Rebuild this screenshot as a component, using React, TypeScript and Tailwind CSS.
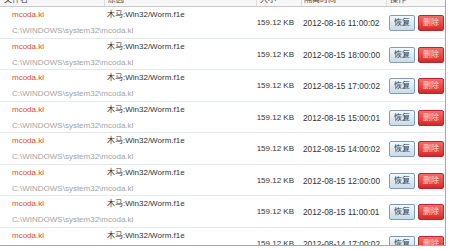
const rows = [
  "2012-08-16 11:00:02",
  "2012-08-15 18:00:00",
  "2012-08-15 17:00:02",
  "2012-08-15 15:00:01",
  "2012-08-15 14:00:02",
  "2012-08-15 12:00:00",
  "2012-08-15 11:00:01",
  "2012-08-14 17:00:02",
];

const font = { fontFamily: '"Liberation Sans", "Noto Sans CJK SC", sans-serif' };

export default function App() {
  return (
    <div className="w-[450px] h-[249px] bg-white overflow-hidden" style={font}>
      <div className="w-[446px] h-[246px] border-r border-b border-[#a9a9a9] overflow-hidden">
        {/* header, scrolled up so only its lower edge shows */}
        <div className="-mt-[11px] h-[18px] flex items-end text-[8px] leading-[8px] text-[#444] bg-[#f7f7f7] border-b border-[#c9c9c9]">
          <div className="w-[104px] pl-[4px] pb-[2px]">文件名</div>
          <div className="w-[152px] pl-[3px] pb-[2px] border-l border-[#dcdcdc] h-full flex items-end">原因</div>
          <div className="w-[45px] pl-[3px] pb-[2px] border-l border-[#dcdcdc] h-full flex items-end">大小</div>
          <div className="w-[85px] pl-[2px] pb-[2px] border-l border-[#dcdcdc] h-full flex items-end">隔离时间</div>
          <div className="flex-1 pl-[3px] pb-[2px] border-l border-[#dcdcdc] h-full flex items-end">操作</div>
        </div>

        {rows.map((d, i) => (
          <div key={i} className="h-[31.5px] flex border-b border-[#e1e9f1] text-[8px] leading-[10px]">
            <div className="w-[104px] pl-[12px] pt-[3px] flex flex-col">
              <span className="text-[#e04e2c]">mcoda.kl</span>
              <span className="mt-[6px] text-[#a3a3a3] whitespace-nowrap">C:\WINDOWS\system32\mcoda.kl</span>
            </div>
            <div className="w-[152px] pl-[3px] pt-[3px] text-[#333]">木马:Win32/Worm.f1e</div>
            <div className="w-[45px] pr-[7px] flex items-center justify-end pt-[2px] text-[#333] whitespace-nowrap">159.12 KB</div>
            <div className="w-[85px] pl-[2px] flex items-center pt-[2px] text-[8.3px] text-[#333] whitespace-nowrap">{d}</div>
            <div className="flex-1 pl-[3px] flex items-center pt-[2px] gap-[3px]">
              <button className="w-[26px] h-[16px] rounded-[2px] border border-[#7f9db9] bg-gradient-to-b from-[#f3f8fc] to-[#c8dbea] text-[8px] text-[#2b3a4a] leading-none">
                恢复
              </button>
              <button className="w-[26px] h-[16px] rounded-[2px] border border-[#b9282a] bg-gradient-to-b from-[#f56b6b] to-[#d62525] text-[8px] text-[#ffd9d9] leading-none">
                删除
              </button>
            </div>
          </div>
        ))}
      </div>
    </div>
  );
}
